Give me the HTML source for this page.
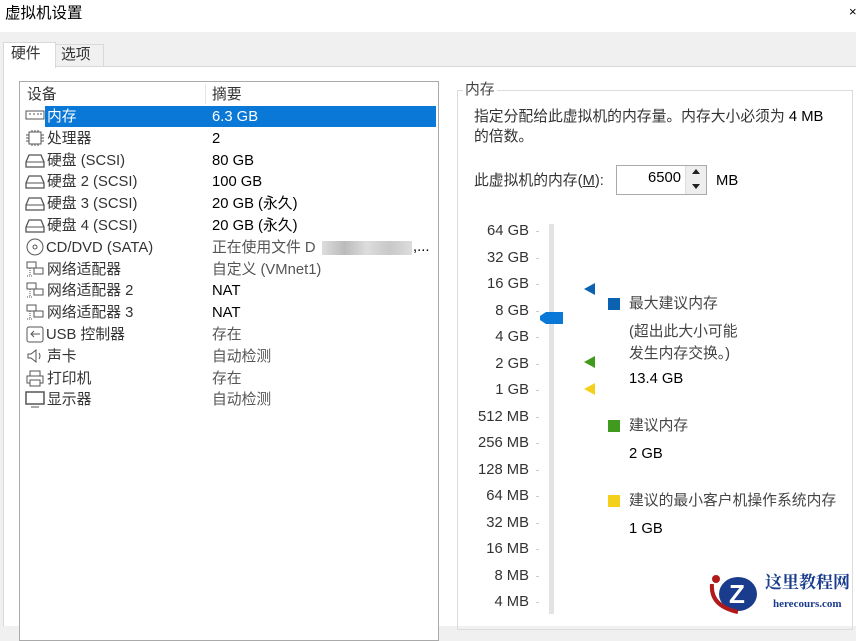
<!DOCTYPE html>
<html><head><meta charset="utf-8"><style>
*{margin:0;padding:0;box-sizing:border-box}
body{width:856px;height:614px;overflow:hidden;background:#f0f0f0;font-family:"Liberation Sans","Noto Sans CJK SC",sans-serif;font-size:14.8px;color:#000;position:relative}
.a{position:absolute;white-space:nowrap;line-height:20px}
</style></head><body>
<div class="a" style="left:0;top:0;width:856px;height:32px;background:#fff"></div>
<div class="a" style="left:5px;top:4px;font-size:15.5px">虚拟机设置</div>
<div class="a" style="left:849px;top:2px;font-size:13px">×</div>
<div class="a" style="left:3px;top:42px;width:53px;height:26px;background:#fff;border:1px solid #d9d9d9;border-bottom:none;z-index:2"></div>
<div class="a" style="left:11px;top:44px;z-index:3;color:#333">硬件</div>
<div class="a" style="left:55px;top:44px;width:49px;height:23px;background:#f0f0f0;border:1px solid #d9d9d9"></div>
<div class="a" style="left:61px;top:45px;color:#333">选项</div>
<div class="a" style="left:3px;top:66px;width:853px;height:560px;background:#fff;border-top:1px solid #d9d9d9;border-left:1px solid #d9d9d9"></div>
<div class="a" style="left:19px;top:81px;width:420px;height:560px;border:1px solid #aaa;background:#fff"></div>
<div class="a" style="left:205px;top:84px;width:1px;height:20px;background:#e5e5e5"></div>
<div class="a" style="left:27px;top:85px;color:#333">设备</div>
<div class="a" style="left:212px;top:85px;color:#333">摘要</div>
<div class="a" style="left:45px;top:106px;width:391px;height:21px;background:#0a78d7"></div>
<div id="rows"></div>
<div class="a" style="left:457px;top:90px;width:396px;height:540px;border:1px solid #dcdcdc"></div>
<div class="a" style="left:463px;top:80px;background:#fff;padding:0 2px;color:#444">内存</div>
<div class="a" style="left:474px;top:107px;line-height:20px;color:#333">指定分配给此虚拟机的内存量。内存大小必须为 <span style="color:#000">4 MB</span><br>的倍数。</div>
<div class="a" style="left:474px;top:171px;color:#333">此虚拟机的内存(<u>M</u>):</div>
<div class="a" style="left:616px;top:165px;width:91px;height:30px;border:1px solid #aaa;background:#fff"></div>
<div class="a" style="left:648px;top:168px">6500</div>
<div class="a" style="left:685px;top:166px;width:21px;height:28px;background:#eee;border-left:1px solid #ddd"></div>
<div class="a" style="left:692px;top:169px;width:0;height:0;border:4px solid transparent;border-bottom:5px solid #222;border-top:none"></div>
<div class="a" style="left:692px;top:184px;width:0;height:0;border:4px solid transparent;border-top:5px solid #222;border-bottom:none"></div>
<div class="a" style="left:716px;top:171px">MB</div>
<div id="sc"></div>
<div class="a" style="left:549px;top:224px;width:5px;height:390px;background:#e3e3e3"></div>
<svg class="a" style="left:538px;top:311px" width="26" height="14"><path d="M8 1H25V13H8L2 9V5Z" fill="#0a78d7"/></svg>
<div class="a" style="left:584px;top:283px;width:0;height:0;border-top:6px solid transparent;border-bottom:6px solid transparent;border-right:11px solid #0b62b0"></div>
<div class="a" style="left:584px;top:356px;width:0;height:0;border-top:6px solid transparent;border-bottom:6px solid transparent;border-right:11px solid #3f9a1e"></div>
<div class="a" style="left:584px;top:383px;width:0;height:0;border-top:6px solid transparent;border-bottom:6px solid transparent;border-right:11px solid #f5d01a"></div>
<div class="a" style="left:608px;top:298px;width:12px;height:12px;background:#0b62b0"></div>
<div class="a" style="left:629px;top:294px;color:#444">最大建议内存</div>
<div class="a" style="left:629px;top:321px;line-height:22px;color:#444">(超出此大小可能<br>发生内存交换。)</div>
<div class="a" style="left:629px;top:369px">13.4 GB</div>
<div class="a" style="left:608px;top:420px;width:12px;height:12px;background:#3f9a1e"></div>
<div class="a" style="left:629px;top:416px;color:#444">建议内存</div>
<div class="a" style="left:629px;top:444px">2 GB</div>
<div class="a" style="left:608px;top:495px;width:12px;height:12px;background:#f5d01a"></div>
<div class="a" style="left:629px;top:491px;color:#444">建议的最小客户机操作系统内存</div>
<div class="a" style="left:629px;top:519px">1 GB</div>
<svg class="a" style="left:708px;top:570px" width="60" height="44"><ellipse cx="30" cy="24" rx="19" ry="17" fill="#1a3c8c"/><text x="21" y="33" font-size="26" font-weight="bold" fill="#fff" font-family="Liberation Sans">Z</text><path d="M4 14Q2 36 30 42" stroke="#b01a1a" stroke-width="4" fill="none"/><circle cx="8" cy="9" r="4" fill="#b01a1a"/></svg>
<div class="a" style="left:765px;top:573px;font-size:17px;font-weight:bold;color:#1a3c8c;font-family:'Liberation Serif','Noto Serif CJK SC',serif">这里教程网</div>
<div class="a" style="left:773px;top:594px;font-size:11px;font-weight:bold;color:#1a3c8c;font-family:'Liberation Serif',serif">herecours.com</div>
<script>
var r=[["内存","6.3 GB",1,"m"],["处理器","2",1,"c"],["硬盘 (SCSI)","80 GB",1,"d"],["硬盘 2 (SCSI)","100 GB",1,"d"],["硬盘 3 (SCSI)","20 GB (永久)",1,"d"],["硬盘 4 (SCSI)","20 GB (永久)",1,"d"],["CD/DVD (SATA)","正在使用文件 D",0,"cd"],["网络适配器","自定义 (VMnet1)",0,"n"],["网络适配器 2","NAT",1,"n"],["网络适配器 3","NAT",1,"n"],["USB 控制器","存在",0,"u"],["声卡","自动检测",0,"s"],["打印机","存在",0,"p"],["显示器","自动检测",0,"mo"]];
var ic={m:'<rect x="1" y="4" width="18" height="8" fill="none" stroke="#555"/><path d="M4 7h2M8 7h2M12 7h2M15 7h2" stroke="#555"/>',c:'<rect x="4" y="3" width="12" height="12" fill="none" stroke="#555"/><path d="M1 6h3M1 9h3M1 12h3M16 6h3M16 9h3M16 12h3M7 1v2M10 1v2M13 1v2M7 15v2M10 15v2M13 15v2" stroke="#555"/>',d:'<path d="M1 11L4 4H16L19 11V16H1Z" fill="none" stroke="#555" stroke-width="1.3"/><path d="M1 11H19" stroke="#555"/>',cd:'<circle cx="10" cy="9" r="8" fill="none" stroke="#555"/><circle cx="10" cy="9" r="2" fill="none" stroke="#555"/>',n:'<rect x="2" y="2" width="9" height="6" fill="none" stroke="#555"/><rect x="9" y="8" width="9" height="6" fill="none" stroke="#555"/><path d="M5 8v8M2 16h6" stroke="#555" stroke-dasharray="1 1"/>',u:'<rect x="2" y="2" width="16" height="15" rx="2" fill="none" stroke="#555"/><path d="M6 9h9M9 6l-3 3 3 3" stroke="#555" fill="none"/>',s:'<path d="M3 7h3l5-4v12l-5-4H3Z" fill="none" stroke="#555"/><path d="M14 6q2 3 0 6" stroke="#555" fill="none"/>',p:'<rect x="5" y="2" width="10" height="5" fill="none" stroke="#555"/><rect x="2" y="7" width="16" height="7" fill="none" stroke="#555"/><rect x="5" y="11" width="10" height="6" fill="#fff" stroke="#555"/>',mo:'<rect x="1" y="2" width="18" height="12" fill="none" stroke="#555" stroke-width="1.5"/><path d="M6 17h8" stroke="#555"/>'};
var h="";r.forEach(function(x,i){var y=106+i*21.8;var sel=i==0;
h+='<svg class="a" style="left:25px;top:'+(y+1)+'px" width="20" height="19">'+ic[x[3]]+'</svg>';
h+='<div class="a" style="left:'+(x[0][0]=="C"||x[0][0]=="U"?46:47)+'px;top:'+(y+1)+'px;color:'+(sel?'#fff':'#333')+'">'+x[0]+'</div>';
h+='<div class="a" style="left:212px;top:'+(y+1)+'px;color:'+(sel?'#fff':(x[2]?'#000':'#555'))+'">'+x[1]+'</div>';});
h+='<div class="a" style="left:322px;top:241px;width:90px;height:14px;background:linear-gradient(90deg,#ddd,#bbb,#ddd,#c8c8c8,#ddd)"></div><div class="a" style="left:413px;top:237px">,...</div>';
document.getElementById("rows").innerHTML=h;
var L=["64 GB","32 GB","16 GB","8 GB","4 GB","2 GB","1 GB","512 MB","256 MB","128 MB","64 MB","32 MB","16 MB","8 MB","4 MB"],s="";
L.forEach(function(t,i){var y=231+i*26.5;s+='<div class="a" style="right:327px;top:'+(y-10)+'px;color:#333">'+t+'</div><div class="a" style="left:536px;top:'+y+'px;width:3px;height:1px;background:#ccc"></div>';});
document.getElementById("sc").innerHTML=s;
</script>
</body></html>
